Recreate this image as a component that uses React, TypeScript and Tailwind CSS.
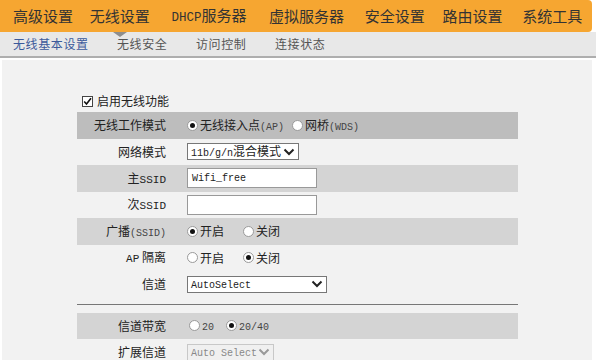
import { ReactNode } from "react";

const CJK = "font-['Noto_Sans_CJK_SC','Noto_Sans',sans-serif]";
const MONO = "font-['Liberation_Mono','Noto_Sans_CJK_SC',monospace]";

const navItems = [
    { label: "高级设置", w: "w-[77px]" },
    { label: "无线设置", w: "w-[82px]" },
    { label: <><span className={`text-[12.5px] ${MONO}`}>DHCP</span>服务器</>, w: "w-[98px]" },
    { label: "虚拟服务器", w: "w-[96px]" },
    { label: "安全设置", w: "w-[78px]" },
    { label: "路由设置", w: "w-[80px]" },
    { label: "系统工具", w: "w-[70px]" },
];

const subTabs = [
    { label: "无线基本设置", w: "w-[104px]", active: true },
    { label: "无线安全", w: "w-[79px]" },
    { label: "访问控制", w: "w-[79px]" },
    { label: "连接状态", w: "w-[79px]" },
];

const Radio = ({ checked, label }: { checked?: boolean; label: ReactNode }) => (
    <span className="flex items-center gap-[2px]">
        <span className="flex h-[11px] w-[11px] items-center justify-center rounded-full border border-[#9a9a9a] bg-white">
            {checked && <span className="h-[5px] w-[5px] rounded-full bg-[#111]" />}
        </span>
        <span>{label}</span>
    </span>
);

const Chevron = ({ color = "#222" }: { color?: string }) => (
    <svg width="12" height="8" viewBox="0 0 12 8">
        <path d="M1.5 1.5 L6 6 L10.5 1.5" fill="none" stroke={color} strokeWidth="2" />
    </svg>
);

const Select = ({ value, w, disabled }: { value: ReactNode; w: string; disabled?: boolean }) => (
    <div
        className={`flex h-[17px] ${w} items-center justify-between border pl-[3px] pr-[3px] ${
            disabled ? "border-[#c8c8c8] bg-[#f0f0f0] text-[#888]" : "border-[#777] bg-white text-[#222]"
        }`}
    >
        <span className="whitespace-nowrap leading-none">{value}</span>
        <Chevron color={disabled ? "#999" : "#222"} />
    </div>
);

const TextInput = ({ value }: { value?: string }) => (
    <div className={`flex h-[20px] w-[130px] items-center border border-[#999] bg-white pl-[4px] text-[10px] text-[#222] ${MONO}`}>
        {value}
    </div>
);

const Row = ({ label, shade, children }: { label: ReactNode; shade?: "dark" | "light"; children: ReactNode }) => (
    <div
        className={`flex h-[26.5px] items-center ${
            shade === "dark" ? "bg-[#bdbdbd]" : shade === "light" ? "bg-[#d4d4d4]" : ""
        }`}
    >
        <div className="w-[89px] text-right whitespace-nowrap">{label}</div>
        <div className="ml-[21px] flex items-center">{children}</div>
    </div>
);

const Small = ({ children }: { children: ReactNode }) => (
    <span className={`text-[10px] text-[#444] ${MONO}`}>{children}</span>
);

const Ascii = ({ children }: { children: ReactNode }) => (
    <span className={`text-[11px] ${MONO}`}>{children}</span>
);

export default function App() {
    return (
        <div className={`h-[360px] w-[596px] overflow-hidden bg-white text-[12px] text-[#222] ${CJK}`}>
            {/* main nav */}
            <div className="relative">
                <div className="flex h-[32px] w-[592px] items-center rounded-r-[4px] bg-[#f6a631] pl-[13px] text-[15px] text-[#333]">
                    {navItems.map((item, i) => (
                        <div key={i} className={`${item.w} whitespace-nowrap`}>
                            {item.label}
                        </div>
                    ))}
                </div>
                <div className="absolute left-[113px] top-[32px] z-10 h-0 w-0 border-x-[7px] border-t-[5px] border-x-transparent border-t-[#8e8e8e]" />
            </div>

            {/* sub tabs */}
            <div className="flex h-[26px] items-center border-b-2 border-[#aeaeae] bg-[#e8e8e8] pl-[13px]">
                {subTabs.map((tab) => (
                    <div
                        key={tab.label}
                        className={`${tab.w} whitespace-nowrap tracking-[0.6px] ${tab.active ? "text-[#3b5a9b]" : "text-[#555]"}`}
                    >
                        {tab.label}
                    </div>
                ))}
            </div>

            {/* content */}
            <div className="ml-[2px] mt-[2px] h-[300px] w-[590px] bg-[#f2f2f2] pl-[75px] pt-[33px]">
                <div className="w-[441px]">
                    <label className="flex h-[16px] items-center gap-[4px] pl-[5px]">
                        <span className="flex h-[11px] w-[11px] items-center justify-center border border-[#444] bg-white">
                            <svg width="9" height="9" viewBox="0 0 9 9">
                                <path d="M1.2 4.5 L3.5 7 L8 1.2" fill="none" stroke="#111" strokeWidth="1.6" />
                            </svg>
                        </span>
                        <span>启用无线功能</span>
                    </label>

                    <div className="mt-[3px]">
                        <Row label="无线工作模式" shade="dark">
                            <div className="flex items-center gap-[8px]">
                                <Radio checked label={<>无线接入点<Small>(AP)</Small></>} />
                                <Radio label={<>网桥<Small>(WDS)</Small></>} />
                            </div>
                        </Row>
                        <Row label="网络模式">
                            <Select w="w-[112px]" value={<><span className={`text-[10px] ${MONO}`}>11b/g/n</span>混合模式</>} />
                        </Row>
                        <Row label={<>主<Ascii>SSID</Ascii></>} shade="light">
                            <TextInput value="Wifi_free" />
                        </Row>
                        <Row label={<>次<Ascii>SSID</Ascii></>}>
                            <TextInput />
                        </Row>
                        <Row label={<>广播<Small>(SSID)</Small></>} shade="light">
                            <div className="flex items-center gap-[19px]">
                                <Radio checked label="开启" />
                                <Radio label="关闭" />
                            </div>
                        </Row>
                        <Row label={<><Ascii>AP</Ascii> 隔离</>}>
                            <div className="flex items-center gap-[19px]">
                                <Radio label="开启" />
                                <Radio checked label="关闭" />
                            </div>
                        </Row>
                        <Row label="信道">
                            <Select w="w-[140px]" value={<span className={`text-[10px] ${MONO}`}>AutoSelect</span>} />
                        </Row>
                    </div>

                    <div className="mt-[6px] h-px bg-[#777]" />

                    <div className="mt-[8px]">
                        <Row label="信道带宽" shade="light">
                            <div className="flex items-center gap-[12px] pl-[2px]">
                                <Radio label={<Small>20</Small>} />
                                <Radio checked label={<Small>20/40</Small>} />
                            </div>
                        </Row>
                        <Row label="扩展信道">
                            <Select w="w-[87px]" disabled value={<span className={`text-[10px] ${MONO}`}>Auto Select</span>} />
                        </Row>
                    </div>
                </div>
            </div>
        </div>
    );
}
